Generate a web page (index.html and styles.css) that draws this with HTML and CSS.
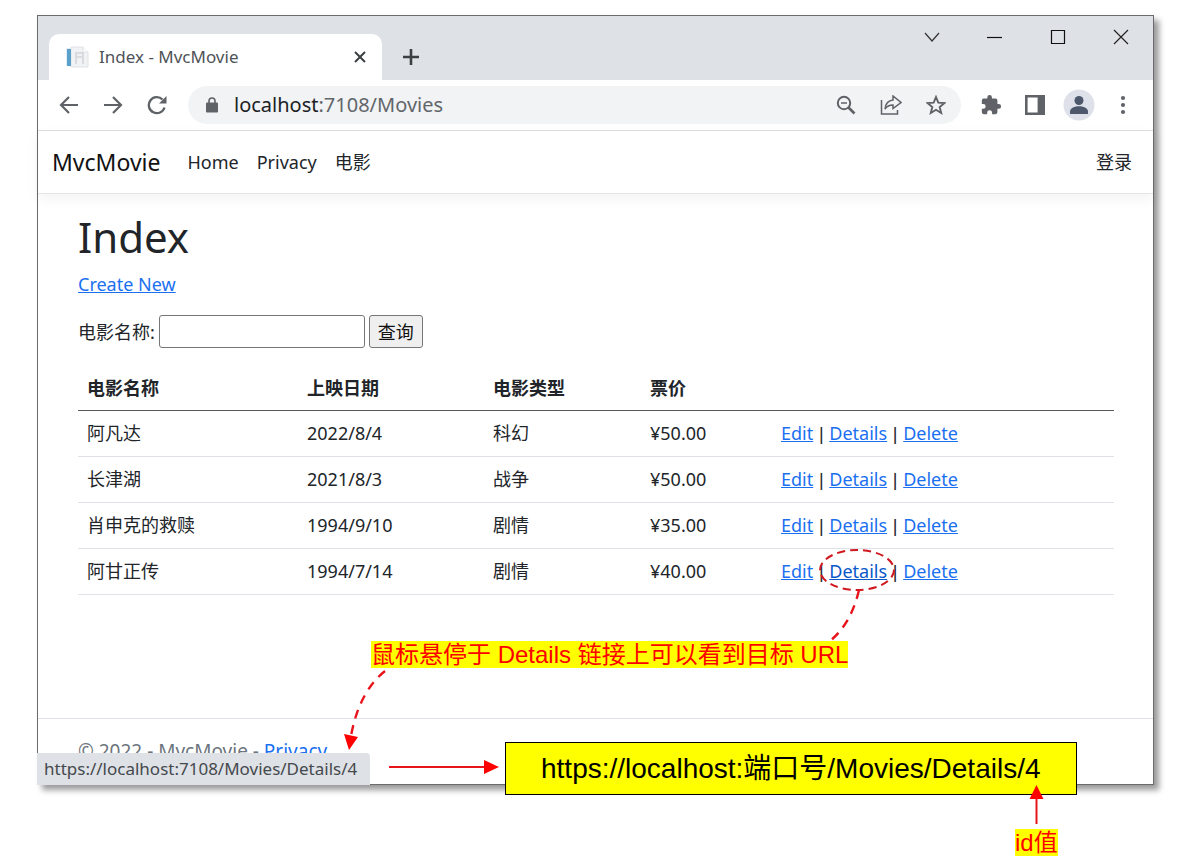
FILE: index.html
```html
<!DOCTYPE html>
<html lang="zh-CN">
<head>
<meta charset="utf-8">
<meta name="viewport" content="width=device-width, initial-scale=1">
<title>Index - MvcMovie</title>
<link rel="stylesheet" href="styles.css">
</head>
<body>
<div class="stage">
  <div class="window">
    <div class="tabstrip">
      <div class="tab">
        <svg class="favicon" width="24" height="24" viewBox="0 0 24 24">
          <path d="M6 2h12l5 5v15H6z" fill="#f1f2f4" stroke="#dfe2e5"/>
          <path d="M18 2v5h5" fill="#fff" stroke="#dfe2e5"/>
          <path d="M11 8h7M11 12h7M11 19V7M18 19V7" stroke="#d8dbdf" stroke-width="2" fill="none"/>
          <path d="M1 3h5v18H1z" fill="#e4eef6"/>
          <path d="M2 4h4v17H2z" fill="#5b9fcb"/>
        </svg>
        <span class="tab-title">Index - MvcMovie</span>
        <button class="icon-btn" aria-label="Close tab"><svg width="12" height="12" viewBox="0 0 12 12"><path d="M1 1l10 10M11 1L1 11" stroke="#3c4043" stroke-width="2"/></svg></button>
      </div>
      <button class="icon-btn new-tab" aria-label="New tab"><svg width="18" height="18" viewBox="0 0 18 18"><path d="M9 1v16M1 9h16" stroke="#3c4043" stroke-width="2.6"/></svg></button>
      <div class="window-controls">
        <button class="icon-btn" aria-label="Search tabs"><svg width="16" height="16" viewBox="0 0 16 16"><path d="M1 4l7 8 7-8" fill="none" stroke="#333" stroke-width="1.2"/></svg></button>
        <button class="icon-btn" aria-label="Minimize"><svg width="16" height="16" viewBox="0 0 16 16"><path d="M0 8.500h15" stroke="#111" stroke-width="1.2"/></svg></button>
        <button class="icon-btn" aria-label="Maximize"><svg width="16" height="16" viewBox="0 0 16 16"><path d="M1.500 1.500h13v13h-13z" fill="none" stroke="#111" stroke-width="1.2"/></svg></button>
        <button class="icon-btn" aria-label="Close"><svg width="16" height="16" viewBox="0 0 16 16"><path d="M1 1l14 14M15 1L1 15" stroke="#222" stroke-width="1.200"/></svg></button>
      </div>
    </div>

    <div class="toolbar">
      <div class="nav-buttons">
        <button class="icon-btn" aria-label="Back"><svg width="20" height="20" viewBox="0 0 20 20"><path d="M19 10H2M10 2l-8 8 8 8" fill="none" stroke="#5f6368" stroke-width="2.2"/></svg></button>
        <button class="icon-btn" aria-label="Forward"><svg width="20" height="20" viewBox="0 0 20 20"><path d="M1 10h17M10 2l8 8-8 8" fill="none" stroke="#5f6368" stroke-width="2.2"/></svg></button>
        <button class="icon-btn" aria-label="Reload"><svg width="20" height="20" viewBox="0 0 20 20"><path d="M17.500 12.500A8 8 0 1 1 15.500 4.500" fill="none" stroke="#5f6368" stroke-width="2.300"/><path d="M19.500 1v7.500H12z" fill="#5f6368"/></svg></button>
      </div>
      <div class="omnibox">
        <svg width="12" height="16" viewBox="0 0 12 16"><path d="M3 6V4a3 3 0 0 1 6 0v2" fill="none" stroke="#5f6368" stroke-width="1.600"/><rect y="5.500" width="12" height="10" rx="1" fill="#5f6368"/></svg>
        <span class="url"><span class="host">localhost</span>:7108/Movies</span>
        <button class="icon-btn" aria-label="Zoom"><svg width="20" height="20" viewBox="0 0 20 20"><circle cx="8" cy="8" r="6.200" fill="none" stroke="#5f6368" stroke-width="2"/><path d="M5 8h6" stroke="#5f6368" stroke-width="1.500"/><path d="M12.500 12.500l6 6" stroke="#5f6368" stroke-width="2.600"/></svg></button>
        <button class="icon-btn" aria-label="Share"><svg width="22" height="20" viewBox="0 0 22 20"><path d="M1.500 5v14h16v-4M13 5V1l8 6.500-8 6V10c-4 0-6 1-8 4 .5-5 3-8.500 8-9z" fill="none" stroke="#5f6368" stroke-width="1.500"/></svg></button>
        <button class="icon-btn" aria-label="Bookmark"><svg width="20" height="20" viewBox="0 0 20 20"><path d="M10 2l2.300 5.600 6.100.5-4.700 3.900 1.500 6-5.200-3.200L4.800 18l1.500-6-4.700-3.900 6.100-.5z" fill="none" stroke="#5f6368" stroke-width="1.900"/></svg></button>
      </div>
      <div class="actions">
        <button class="icon-btn" aria-label="Extensions"><svg width="22" height="22" viewBox="0 0 24 24"><path d="M20.500 11H19V7a2 2 0 0 0-2-2h-4V3.500a2.500 2.500 0 0 0-5 0V5H4a2 2 0 0 0-2 2v3.800h1.500a2.700 2.700 0 0 1 0 5.400H2V20a2 2 0 0 0 2 2h3.800v-1.500a2.700 2.700 0 0 1 5.400 0V22H17a2 2 0 0 0 2-2v-4h1.500a2.500 2.500 0 0 0 0-5z" fill="#5f6368"/></svg></button>
        <button class="icon-btn" aria-label="Side panel"><svg width="20" height="20" viewBox="0 0 20 20"><path d="M0 0h20v20H0zM2.600 2.600v14.800h10V2.600z" fill="#5f6368" fill-rule="evenodd"/></svg></button>
        <button class="icon-btn" aria-label="Profile"><svg width="32" height="32" viewBox="0 0 32 32"><circle cx="16" cy="16" r="15.500" fill="#dee1e9"/><circle cx="16" cy="11.500" r="4.500" fill="#4e586c"/><path d="M7 25v-2.500c0-3.500 5-5.300 9-5.300s9 1.800 9 5.300V25z" fill="#4e586c"/></svg></button>
        <button class="icon-btn" aria-label="Menu"><svg width="20" height="20" viewBox="0 0 20 20"><g fill="#5f6368"><circle cx="10" cy="3" r="2.100"/><circle cx="10" cy="10" r="2.100"/><circle cx="10" cy="17" r="2.100"/></g></svg></button>
      </div>
    </div>

    <nav class="navbar">
      <a class="brand" href="#">MvcMovie</a>
      <a href="#">Home</a>
      <a href="#">Privacy</a>
      <a href="#">电影</a>
      <a class="login" href="#">登录</a>
    </nav>

    <main class="content">
      <h1>Index</h1>
      <p class="create"><a href="#">Create New</a></p>
      <form class="search">
        <label for="title">电影名称:</label>
        <input id="title" type="text">
        <button type="button">查询</button>
      </form>
      <table class="movies">
        <colgroup><col class="c-name"><col class="c-date"><col class="c-genre"><col class="c-price"><col></colgroup>
        <thead>
          <tr><th>电影名称</th><th>上映日期</th><th>电影类型</th><th>票价</th><th></th></tr>
        </thead>
        <tbody>
          <tr><td>阿凡达</td><td>2022/8/4</td><td>科幻</td><td>¥50.00</td><td><a href="#">Edit</a> <span class="sep">|</span> <a href="#">Details</a> <span class="sep">|</span> <a href="#">Delete</a></td></tr>
          <tr><td>长津湖</td><td>2021/8/3</td><td>战争</td><td>¥50.00</td><td><a href="#">Edit</a> <span class="sep">|</span> <a href="#">Details</a> <span class="sep">|</span> <a href="#">Delete</a></td></tr>
          <tr><td>肖申克的救赎</td><td>1994/9/10</td><td>剧情</td><td>¥35.00</td><td><a href="#">Edit</a> <span class="sep">|</span> <a href="#">Details</a> <span class="sep">|</span> <a href="#">Delete</a></td></tr>
          <tr><td>阿甘正传</td><td>1994/7/14</td><td>剧情</td><td>¥40.00</td><td><a href="#">Edit</a> <span class="sep">|</span> <a class="hovered" href="#">Details</a> <span class="sep">|</span> <a href="#">Delete</a></td></tr>
        </tbody>
      </table>
    </main>

    <footer class="footer">© 2022 - MvcMovie - <a href="#">Privacy</a></footer>
    <div class="status">https://localhost:7108/Movies/Details/4</div>
  </div>

  <div class="note note-hover">鼠标悬停于 Details 链接上可以看到目标 URL</div>
  <div class="url-box">https://localhost:端口号/Movies/Details/4</div>
  <div class="note note-id">id值</div>
  <svg class="marks" width="1192" height="867" viewBox="0 0 1192 867">
    <g fill="none" stroke="#e8141c" stroke-width="2">
      <ellipse cx="857" cy="570" rx="37" ry="20" stroke="#d01820" stroke-dasharray="8 5"/>
      <path d="M859 590Q851 624 830 641" stroke-width="2.400" stroke-dasharray="9 7"/>
      <path d="M385 671Q359 692 351 736" stroke-width="2.400" stroke-dasharray="9 7"/>
      <path d="M389 767h97M1036.500 824v-26"/>
    </g>
    <path d="M349 750l-5-16 14 3zM499 767l-15 7v-14zM1036.500 785l7 14h-14z" fill="#f00"/>
  </svg>
</div>
</body>
</html>
```
FILE: styles.css
```css
* { box-sizing: border-box; }

body {
  margin: 0;
  background: #fff;
  color: #212529;
  font-family: "Noto Sans", "Noto Sans CJK SC", sans-serif;
  font-size: 18px;
  line-height: 26px;
}

a { color: #1a70f0; }

.stage {
  position: relative;
  padding: 15px 38px 80px 37px;
}

.window {
  position: relative;
  display: flex;
  flex-direction: column;
  background: #fff;
  border: 1px solid #6b6b6e;
  box-shadow: 5px 5px 6px rgba(0, 0, 0, 0.4);
}

.icon-btn {
  display: flex;
  align-items: center;
  justify-content: center;
  padding: 0;
  border: 0;
  background: none;
}

.tabstrip {
  display: flex;
  height: 64px;
  padding: 18px 24px 0 11px;
  background: #dee1e6;
}

.tab {
  display: flex;
  align-items: center;
  width: 333px;
  padding: 0 16px;
  background: #fff;
  border-radius: 10px 10px 0 0;
}

.favicon { margin-right: 10px; }

.tab-title {
  flex: 1;
  color: #4f5358;
  font-size: 17px;
}

.new-tab {
  align-self: center;
  margin-left: 20px;
}

.window-controls {
  display: flex;
  gap: 47px;
  height: 16px;
  margin: -5px 0 0 auto;
}

.toolbar {
  display: flex;
  align-items: center;
  height: 51px;
  padding: 0 14px 0 21px;
  border-bottom: 1px solid #dcdee0;
}

.nav-buttons {
  display: flex;
  gap: 24px;
  margin-right: 21px;
}

.omnibox {
  display: flex;
  flex: 1;
  align-items: center;
  gap: 24px;
  height: 38px;
  padding: 0 15px 0 18px;
  background: #f1f3f4;
  border-radius: 19px;
}

.url {
  flex: 1;
  margin-left: -8px;
  color: #62666b;
  font-size: 20px;
}

.host { color: #202124; }

.actions {
  display: flex;
  align-items: center;
  gap: 12px;
  margin-left: 14px;
}

.actions .icon-btn { width: 32px; }

.navbar {
  display: flex;
  align-items: center;
  gap: 18px;
  height: 63px;
  padding: 0 21px 0 14px;
  border-bottom: 1px solid #e3e5e7;
  box-shadow: 0 5px 13px rgba(0, 0, 0, 0.05);
}

.navbar a {
  color: #212529;
  text-decoration: none;
}

.navbar .brand {
  margin-right: 9px;
  color: #111;
  font-size: 23px;
}

.navbar .login { margin-left: auto; }

.content { padding: 16px 39px 123px 40px; }

h1 {
  margin: 0 0 7px;
  font-size: 42px;
  font-weight: 400;
  line-height: 54px;
}

.create { margin: 0 0 18px; }

.search {
  display: flex;
  align-items: center;
  gap: 4px;
  margin-bottom: 18px;
}

.search input {
  width: 206px;
  height: 33px;
  border: 1px solid #767676;
  border-radius: 3px;
  font: inherit;
}

.search button {
  height: 33px;
  padding: 0 8px;
  border: 1px solid #767676;
  border-radius: 3px;
  background: #efefef;
  color: #111;
  font: inherit;
}

.movies {
  width: 100%;
  border-collapse: collapse;
  table-layout: fixed;
}

.c-name { width: 220px; }
.c-date { width: 186px; }
.c-genre { width: 157px; }
.c-price { width: 131px; }

.movies th,
.movies td {
  padding: 9px;
  border-bottom: 1px solid #dee2e6;
  text-align: left;
}

.movies td { line-height: 27px; }

.movies th {
  border-bottom-color: #55585b;
  font-weight: 700;
}

.movies .hovered { color: #0a58ca; }

.sep {
  padding: 0 1px;
  font-family: "Liberation Sans", sans-serif;
  line-height: 1;
}

.footer {
  height: 66px;
  padding-left: 40px;
  border-top: 1px solid #dee2e6;
  color: #6c757d;
  font-size: 19px;
  line-height: 64px;
}

.footer a { text-decoration: none; }

.status {
  position: absolute;
  bottom: -1px;
  left: -1px;
  padding: 3px 13px 3px 7px;
  background: #dee1e6;
  border-radius: 0 4px 0 0;
  color: #45494d;
  font-size: 17px;
}

.note {
  position: absolute;
  background: #ff0;
  color: #f00;
  font-family: "Liberation Sans", "Noto Sans CJK SC", sans-serif;
  font-size: 24px;
  line-height: 27px;
  white-space: nowrap;
}

.note-hover {
  top: 641px;
  left: 371px;
}

.note-id {
  top: 829px;
  left: 1015px;
}

.url-box {
  position: absolute;
  top: 742px;
  left: 505px;
  padding: 0 35px;
  border: 1px solid #000;
  background: #ff0;
  color: #000;
  font-family: "Liberation Sans", "Noto Sans CJK SC", sans-serif;
  font-size: 28px;
  line-height: 51px;
  white-space: nowrap;
}

.marks {
  position: absolute;
  top: 0;
  left: 0;
}
```
